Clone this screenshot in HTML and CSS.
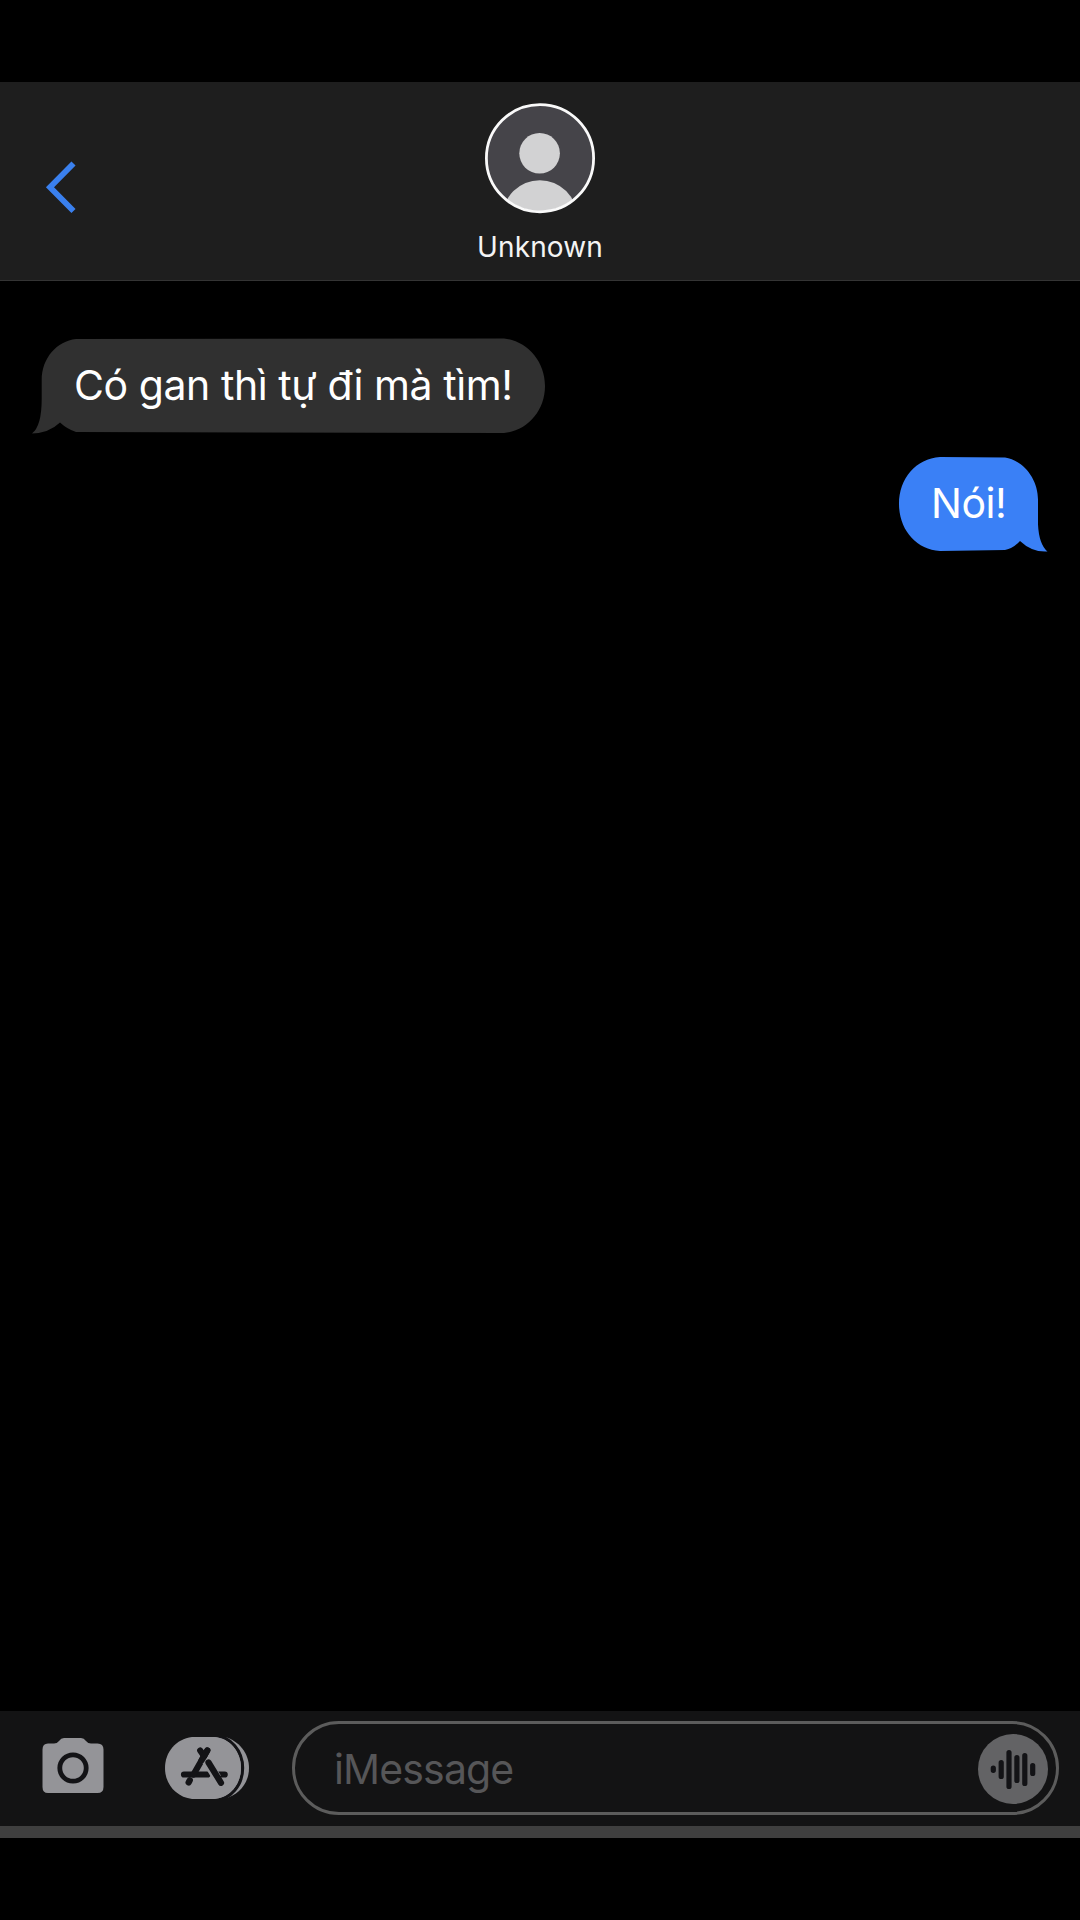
FILE: index.html
```html
<!DOCTYPE html>
<html lang="vi">
<head>
<meta charset="utf-8">
<title>Messages</title>
<link rel="stylesheet" href="styles.css">
</head>
<body>
<div class="screen">
  <header class="header">
    <svg class="back" viewBox="0 0 34 56" aria-label="Back"><path d="M29.500 4.500 6 28.300 29.500 52"/></svg>
    <div class="contact">
      <svg class="avatar" viewBox="0 0 110 110">
        <defs><clipPath id="face"><circle cx="55" cy="55" r="53"/></clipPath></defs>
        <circle cx="55" cy="55" r="53.6" fill="#454449"/>
        <g clip-path="url(#face)" fill="#d2d2d3">
          <circle cx="54.6" cy="50.3" r="20.3"/>
          <circle cx="54.8" cy="114.5" r="37.3"/>
        </g>
        <circle cx="55" cy="55.200" r="53.6" fill="none" stroke="#fafafa" stroke-width="2.8"/>
      </svg>
      <span class="name">Unknown</span>
    </div>
  </header>

  <main class="thread">
    <div class="message received">
      <svg class="bubble" viewBox="0 0 514 96" fill="#303030"><path d="M44 1 472 .5C495 3 513 23 513 48S495 93 472 95L44 94Q35 91 28 84.500Q17 95 0 95.500Q9.700 88 9.700 61V42C9.700 20 25 3 44 1Z"/></svg>
      <span class="text">Có gan thì tự đi mà tìm!</span>
    </div>
    <div class="message sent">
      <svg class="bubble" viewBox="0 0 149 96" fill="#3a80f6"><path d="M41 1 106 1.500C125 4.500 139 23.500 139 43.500V68.500Q140 88.500 148.500 95.500Q133 96.500 121 85Q114 92.500 106 94L41 95C17 93.500 0 73.500 0 48S17 2.500 41 1Z"/></svg>
      <span class="text">Nói!</span>
    </div>
  </main>

  <footer class="composer">
    <svg class="camera" viewBox="0 0 62 56">
      <path fill="#949498" d="M6 5.500H12Q15 5.500 17 3Q19 0 22 0H39Q42 0 44 3Q46 5.500 49 5.500H55.500Q61.500 5.500 61.500 11.500V49Q61.500 55 55.500 55H6Q.5 55 .5 49V11.500Q.5 5.500 6 5.500Z"/>
      <circle cx="31" cy="30" r="13.200" fill="none" stroke="#131316" stroke-width="4.800"/>
    </svg>
    <svg class="apps" viewBox="0 0 84 62">
      <path fill="#949498" d="M28 0H60C74 4 84 16 84 31S74 58 60 61.500H28Z"/>
      <path fill="#949498" stroke="#131316" stroke-width="3.200" d="M27-1.600H49C66-.5 77.600 14 77.600 31S66 62.500 49 63.600H27Z"/>
      <path fill="#949498" d="M27 0H49C65 1 76 15 76 31S65 61 49 62H27C11 60 0 47 0 31S11 2 27 0Z"/>
      <g fill="none" stroke-linecap="round" stroke-width="6.200" stroke="#131316">
        <path d="M35.200 13.500 39 19M19 37.500H42.500M54 37.500H59.700"/>
        <path d="M42.300 13.500 28.500 37.500M24.800 43.200 23.600 45.500"/>
        <path stroke="#949498" stroke-width="9" stroke-linecap="butt" d="M40.500 22.500 52 41"/>
        <path d="M42.300 13.500 36.500 23.500M43.500 25.500 56 45.800"/>
      </g>
    </svg>
    <div class="field">
      <span class="placeholder">iMessage</span>
      <svg class="voice" viewBox="0 0 70 70">
        <circle cx="35" cy="35" r="35" fill="#636365"/>
        <path fill="none" stroke="#131316" stroke-width="5.200" stroke-linecap="round" d="M15.300 34.200V36.300M23.200 28.500V42.500M31 18.500V52.500M38.900 23.500V46.500M46.800 21.500V49.500M54.700 31.500V39.500"/>
      </svg>
    </div>
  </footer>
</div>
</body>
</html>
```

FILE: styles.css
```css
* { box-sizing: border-box; }
body { margin: 0; background: #000; font-family: Inter, "Liberation Sans", sans-serif; }
svg { display: block; flex: none; }
.screen { width: 1080px; height: 1920px; padding: 82px 0; display: flex; flex-direction: column; background: #000; }
.header { height: 199px; flex: none; display: grid; grid-template-columns: 1fr auto 1fr; background: #1e1e1e; border-bottom: 1px solid #343434; }
.back { width: 34px; height: 56px; margin: 77px 0 0 44px; fill: none; stroke: #3a80ee; stroke-width: 5.8; }
.contact { display: flex; flex-direction: column; align-items: center; padding-top: 21px; }
.avatar { width: 110px; height: 110px; overflow: visible; }
.name { margin-top: 17px; color: #f4f4f4; font-size: 28px; line-height: 34px; letter-spacing: 0.15px; }
.thread { flex: 1; display: flex; flex-direction: column; gap: 22px; padding: 57px 32px 0; }
.message { position: relative; height: 96px; color: #fff; font-size: 41px; line-height: 50px; letter-spacing: -0.43px; white-space: nowrap; }
.received { align-self: flex-start; width: 514px; padding: 22px 0 0 42px; }
.sent { align-self: flex-end; width: 149px; padding: 22px 0 0 32px; }
.bubble { position: absolute; inset: 0; width: 100%; height: 100%; }
.text { position: relative; }
.composer { height: 127px; flex: none; display: flex; align-items: flex-start; padding: 10px 21px 0 42px; background: #131314; border-bottom: 12px solid #3f3f3f; }
.camera { width: 62px; height: 56px; margin-top: 17px; }
.apps { width: 84px; height: 62px; margin: 16px 0 0 61px; }
.field { flex: 1; height: 94px; margin-left: 43px; display: flex; align-items: center; justify-content: space-between; padding: 1px 8px 0 39px; border: 3px solid #5c5c5c; border-radius: 47px; }
.placeholder { color: #565658; font-size: 41px; line-height: 50px; letter-spacing: -0.85px; }
.voice { width: 70px; height: 70px; }
```
